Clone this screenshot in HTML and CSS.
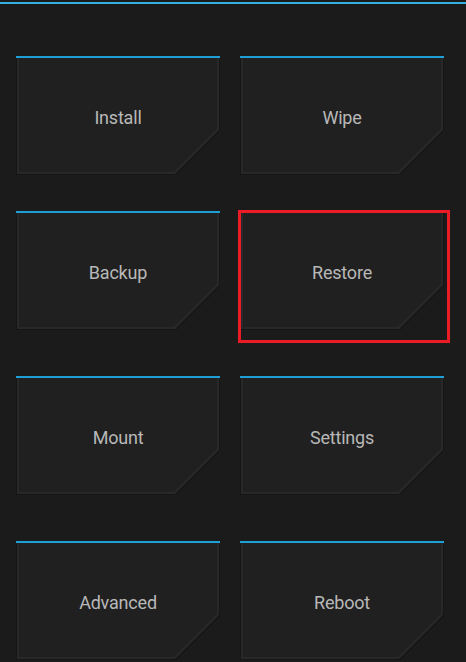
FILE: index.html
```html
<!DOCTYPE html>
<html lang="en">
<head>
    <meta charset="UTF-8">
    <meta name="viewport" content="width=device-width, initial-scale=1.0">
    <title>Main Menu</title>
    <link rel="stylesheet" href="styles.css">
</head>
<body>
    <div class="top-line"></div>

    <main class="menu">
        <div class="row">
            <div class="cell">
                <div class="tile"><div class="tile-edge"><div class="tile-face">Install</div></div></div>
            </div>
            <div class="cell">
                <div class="tile"><div class="tile-edge"><div class="tile-face">Wipe</div></div></div>
            </div>
        </div>
        <div class="row">
            <div class="cell">
                <div class="tile"><div class="tile-edge"><div class="tile-face">Backup</div></div></div>
            </div>
            <div class="cell">
                <div class="tile"><div class="tile-edge"><div class="tile-face">Restore</div></div></div>
                <div class="highlight"></div>
            </div>
        </div>
        <div class="row spaced">
            <div class="cell">
                <div class="tile"><div class="tile-edge"><div class="tile-face">Mount</div></div></div>
            </div>
            <div class="cell">
                <div class="tile"><div class="tile-edge"><div class="tile-face">Settings</div></div></div>
            </div>
        </div>
        <div class="row spaced">
            <div class="cell">
                <div class="tile"><div class="tile-edge"><div class="tile-face">Advanced</div></div></div>
            </div>
            <div class="cell">
                <div class="tile"><div class="tile-edge"><div class="tile-face">Reboot</div></div></div>
            </div>
        </div>
    </main>
</body>
</html>
```

FILE: styles.css
```css
/* General */
body {
    margin: 0;
    background: #1b1b1b;
    font-family: Roboto, "Liberation Sans", sans-serif;
    height: 662px;
    overflow: hidden;
}

.top-line {
    height: 2px;
    margin-top: 2px;
    background: #33b2e2;
}

/* Menu grid */
.menu {
    display: flex;
    flex-direction: column;
    gap: 36px;
    padding: 52px 0 0 16px;
}

.row {
    display: flex;
    gap: 20px;
}

.row.spaced {
    margin-top: 10px;
}

.cell {
    position: relative;
    width: 204px;
}

/* Bevelled tiles */
.tile {
    border-top: 2px solid #1e9fd6;
    background: #161616;
    padding: 0 1px 1px 1px;
    clip-path: polygon(0 0, 100% 0, 100% calc(100% - 44px), calc(100% - 44px) 100%, 0 100%);
}

.tile-edge {
    background: #282828;
    padding: 0 2px 2px 2px;
    clip-path: polygon(0 0, 100% 0, 100% calc(100% - 44px), calc(100% - 44px) 100%, 0 100%);
}

.tile-face {
    height: 114px;
    background: #202020;
    color: #b8b8b8;
    font-size: 18px;
    letter-spacing: -0.2px;
    display: flex;
    align-items: center;
    justify-content: center;
    padding-top: 4px;
    box-sizing: border-box;
    clip-path: polygon(0 0, 100% 0, 100% calc(100% - 43px), calc(100% - 43px) 100%, 0 100%);
}

/* Selection frame */
.highlight {
    position: absolute;
    left: -2px;
    top: -1px;
    width: 206px;
    height: 127px;
    border: 3px solid #ec1c26;
}
```
